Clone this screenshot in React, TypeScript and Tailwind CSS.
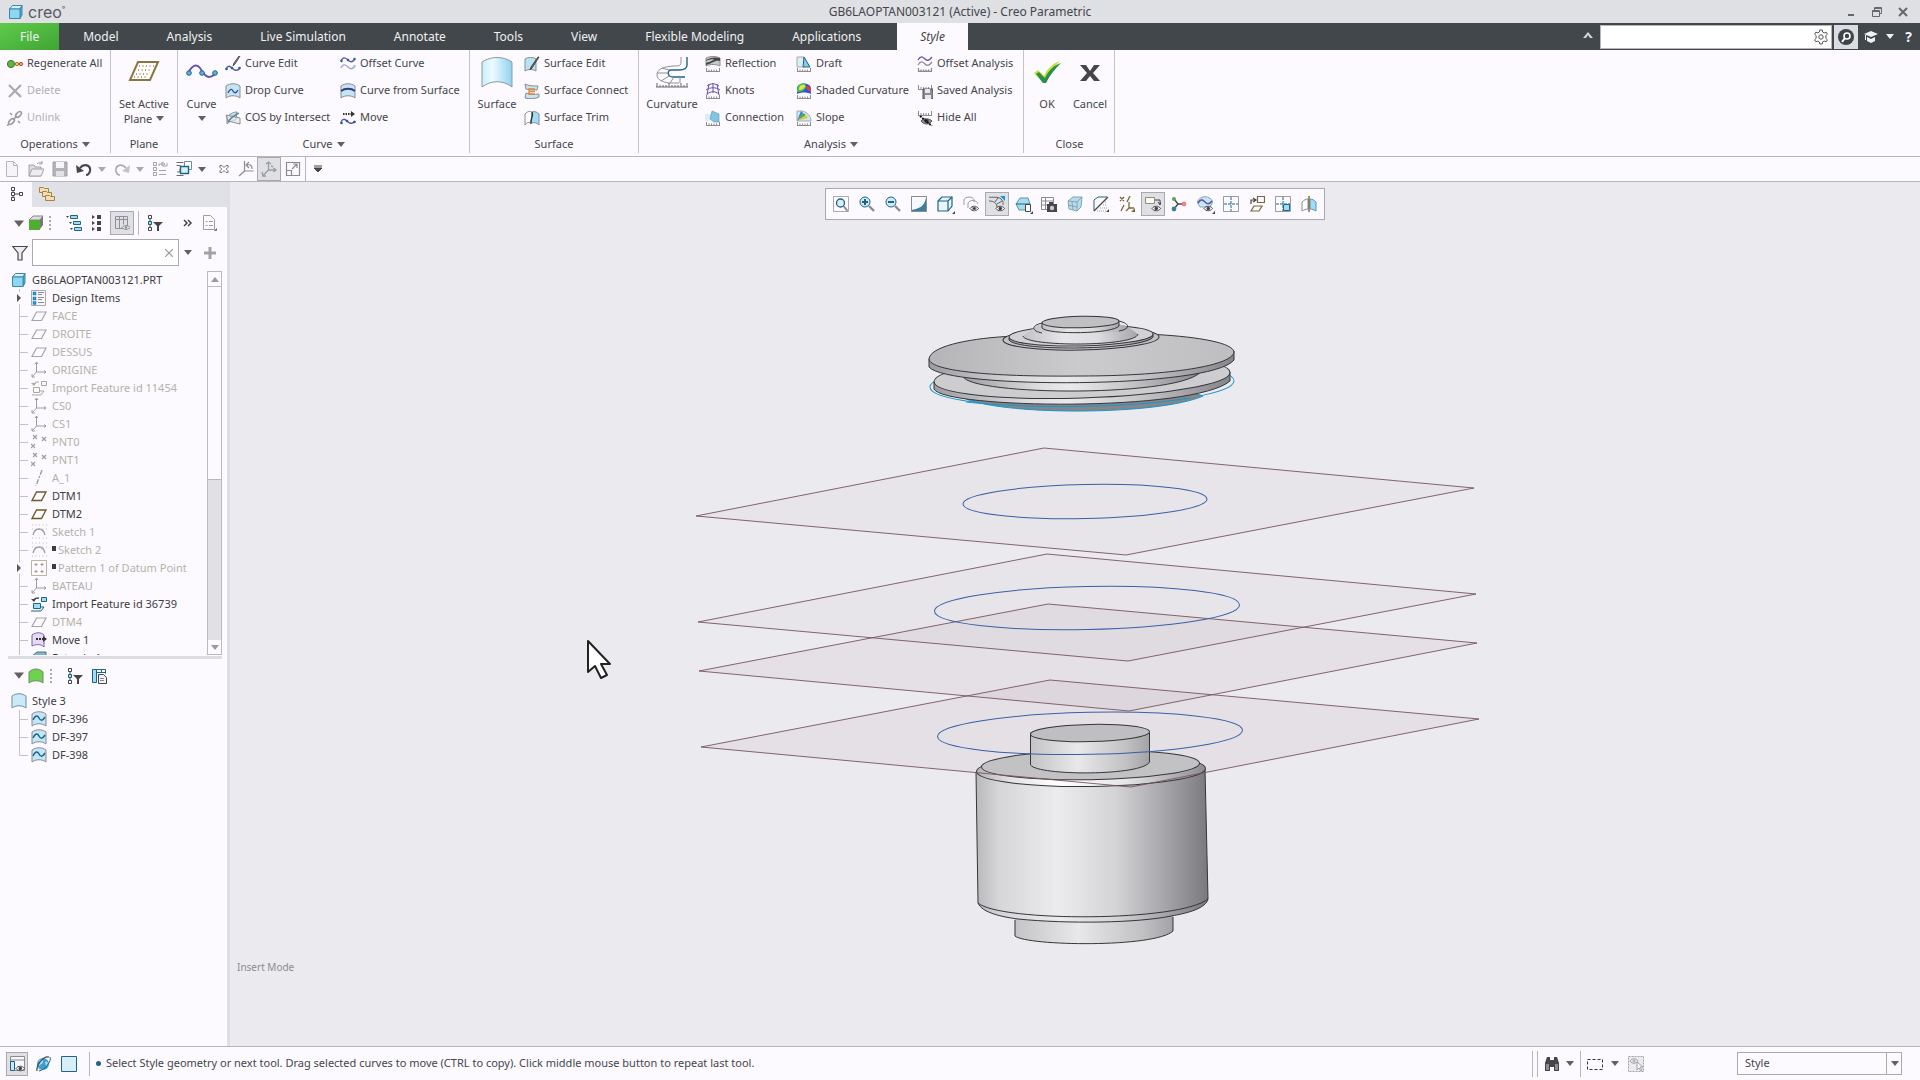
import type { ReactNode } from "react";
import clsx from "clsx";

const blue = "#1d6485";
const sky = "#9fdcf5";
const gray = "#8b8b90";
const dark = "#45454a";
const purple = "#6a4fb0";

const ruler = (
  <path d="M1 15.500h14M1.500 12v3M4 13.500v2M6.500 13.500v2M9 13.500v2M11.500 13.500v2M14.500 12v3" stroke={gray} fill="none" />
);
const eye = (
  <g>
    <path d="M7 12.500c2-3 6.500-3 8.500 0c-2 3-6.500 3-8.500 0z" fill="#fff" stroke={dark} />
    <circle cx="11.300" cy="12.500" r="1.800" fill={dark} />
  </g>
);
const corner = <path d="M16 13v3h-3z" fill={dark} />;
const sheet = (
  <path d="M1 3c4-3 10-3 14 0v12c-4-3-10-3-14 0z" fill="#c3e6f6" stroke={gray} />
);

const icons: Record<string, ReactNode> = {
  regenerate: (
    <g>
      <path d="M8 8h7" stroke="#b04a30" />
      <circle cx="4" cy="8" r="3.600" fill="#5cb548" stroke="#3f7d33" />
      <circle cx="10" cy="8" r="1.700" fill="#f2cf5b" stroke="#a37a1d" />
      <circle cx="14" cy="8" r="1.600" fill="#f6b0a0" stroke="#b23a2a" />
    </g>
  ),
  delete: <path d="M2 2l12 12M14 2L2 14" stroke="#a9a9ae" strokeWidth="2.200" />,
  unlink: (
    <g fill="none" stroke="#9a9a9f" strokeWidth="1.600">
      <ellipse cx="4.500" cy="11.500" rx="3.500" ry="2" transform="rotate(-45 4.500 11.500)" />
      <ellipse cx="11.500" cy="4.500" rx="3.500" ry="2" transform="rotate(-45 11.500 4.500)" />
      <path d="M6 10l4-4M0 16l2-2M5 5L3 3M11 11l2 2" />
    </g>
  ),
  curveEdit: (
    <g fill="none">
      <path d="M15 0l-5 8-2 2 1-3 5-7z" fill="#888" stroke="#555" />
      <path d="M1 13c2-4 4-3 6-1s5 4 8 0" stroke={purple} strokeWidth="1.400" />
      <circle cx="1.500" cy="13" r="1.300" fill={blue} />
      <circle cx="7" cy="12" r="1.300" fill={blue} />
      <circle cx="14.500" cy="12" r="1.300" fill={blue} />
    </g>
  ),
  dropCurve: (
    <g>
      {sheet}
      <path d="M3 10c2-5 4-4 5-2s3 3 5-1" fill="none" stroke="#3a4b93" strokeWidth="1.400" />
    </g>
  ),
  cos: (
    <g fill="none" stroke={gray}>
      <path d="M2 7c4-4 7-5 10-5l-1 8c-3 0-6 1-9 4z" fill="#c5e2ee" />
      <path d="M1 5l14 3v6L3 11z" fill="#e7e7ee" fillOpacity=".7" />
      <path d="M3 12c3-5 6-6 11-9" stroke="#4c8a96" strokeWidth="1.300" />
    </g>
  ),
  offsetCurve: (
    <g fill="none" strokeWidth="1.400">
      <path d="M1 5c2-5 5-3 7-1s4 3 7-1" stroke={purple} />
      <circle cx="1.500" cy="5" r="1.200" fill={blue} />
      <circle cx="8" cy="4" r="1.200" fill={blue} />
      <circle cx="14.500" cy="3" r="1.200" fill={blue} />
      <path d="M1 12c2-5 5-3 7-1s4 3 7-1" stroke="#a9a3cf" />
      <circle cx="14.500" cy="10" r="1.200" fill="#9cc" />
    </g>
  ),
  curveSurface: (
    <g>
      {sheet}
      <path d="M1 8c4-3 10-3 14 0" fill="none" stroke="#35397f" strokeWidth="1.800" />
    </g>
  ),
  move: (
    <g fill="none">
      <path d="M3 4h8" stroke="#333" strokeDasharray="1.500 1" strokeWidth="2" />
      <path d="M11 1l4 3-4 3z" fill="#333" />
      <path d="M1 12c2-4 4-3 6-1s5 4 8 0" stroke={purple} strokeWidth="1.400" />
      <circle cx="1.500" cy="13" r="1.300" fill={blue} />
      <circle cx="7" cy="11" r="1.300" fill={blue} />
      <circle cx="14.500" cy="12" r="1.300" fill={blue} />
    </g>
  ),
  surfaceEdit: (
    <g>
      <path d="M1 3c3-2 8-2 11 0v12c-3-2-8-2-11 0z" fill="#b9e2f2" stroke={gray} />
      <path d="M15 1l-7 11-2 2 1-3 7-10z" fill="#777" stroke="#444" />
    </g>
  ),
  surfaceConnect: (
    <g stroke={gray}>
      <path d="M1 1c4 2 8 2 13 2l-1 4c-4 0-8 0-11-1z" fill="#c3e6f6" />
      <path d="M2 10c4 1 8 2 13 1v3c-4 2-9 2-14 1z" fill="#c3e6f6" />
      <path d="M5 6h6M5 8.500h6M5 11h6M5 5v7" stroke="#e0853b" strokeWidth="1.300" fill="none" />
    </g>
  ),
  surfaceTrim: (
    <g stroke={gray} fill="none">
      <path d="M1 4c3-3 5-3 7-2l-1 11c-2-1-4-1-6 2z" fill="#fff" />
      <path d="M8 2c3-1 5 0 7 2v11c-2-2-4-3-8-2z" fill={sky} />
      <path d="M8 2c2 4-2 7-1 12" stroke="#333" strokeWidth="1.300" />
    </g>
  ),
  reflection: (
    <g>
      <path d="M1 2c4-2 10-2 14 0v8c-4-2-10-2-14 0z" fill="#c8c8cc" stroke={gray} />
      <path d="M1 4c5-3 10-3 14-2v3c-6-1-6 2-14 4V7c5-1 7-3 8-4-4 0-6 1-8 2z" fill="#444" />
      {ruler}
    </g>
  ),
  knots: (
    <g>
      <path d="M2 3c4-3 8-3 12 0M1 7c4-3 10-3 14 0M2 11c4-3 8-3 12 0M4 1L2 12M8 0v10M12 1l2 11" fill="none" stroke={purple} />
      {ruler}
    </g>
  ),
  connection: (
    <g>
      <path d="M0 4h7l-3 7H0z" fill="#d9eef8" />
      <path d="M7 1l7 3v8H9L5 9z" fill="#83c3e2" stroke="#5b94ad" strokeWidth=".6" />
      {ruler}
    </g>
  ),
  draft: (
    <g>
      <path d="M1 1h7v10H1z" fill="#dbeef7" stroke="#a8a8ad" />
      <path d="M8 1l6 10H7z" fill="#8cc7e3" stroke={blue} />
      {ruler}
    </g>
  ),
  shaded: (
    <g>
      <path d="M1 11V5c1-6 13-6 14 0v6c-4-2-10-2-14 0z" fill="#2e52d8" />
      <path d="M1 7c1-8 9-8 9-4s-4 6-9 6z" fill="#3fc45a" />
      <path d="M3 5c1-4 6-4 6-2s-3 4-6 4z" fill="#f3df3a" />
      <path d="M10 3c4 0 5 2 5 6-3-1-5-3-5-6z" fill="#e2403a" />
      {ruler}
    </g>
  ),
  slope: (
    <g>
      <path d="M1 1h5c5 1 9 5 9 10H1z" fill="#cfeaf5" stroke="#9ab" />
      <path d="M1 11L5 1l2 2z" fill="#4277d8" />
      <path d="M1 11L7 3l3 2z" fill="#3fae4f" />
      <path d="M1 11l9-6 2 3z" fill="#e7c33e" />
      {ruler}
    </g>
  ),
  offsetAnalysis: (
    <g fill="none" strokeWidth="1.300">
      <path d="M1 4c3-5 5-3 7-1s4 2 7-2" stroke={purple} />
      <path d="M1 9c3-5 5-3 7-1s4 2 7-2" stroke={gray} />
      {ruler}
    </g>
  ),
  savedAnalysis: (
    <g>
      <path d="M1 6.500h14M1.500 2v4M4 4v2M6.500 4v2M9 4v2M11.500 4v2M14.500 2v4" stroke={gray} />
      <path d="M6 6h10v10H6z" fill="#8a8a90" stroke="#555" />
      <path d="M8 6h5v4H8zM8 12h6v4H8z" fill="#e8e8ec" />
    </g>
  ),
  hideAll: (
    <g>
      <path d="M1 5.500h14M1.500 1v4M4 3v2M6.500 3v2M9 3v2M11.500 3v2M14.500 1v4" stroke={gray} />
      <path d="M4 11c2-3 8-3 11 0-3 4-8 4-11 0z" fill="#8b8b90" stroke="#555" />
      <circle cx="9.500" cy="11" r="2" fill="#333" />
      <path d="M3 6l12 10" stroke="#111" strokeWidth="1.800" strokeDasharray="2 1" />
    </g>
  ),
  file: <path d="M2.500.5h7l4 4v11h-11zM9.500.5v4h4" fill="#f5f5f9" stroke="#b5b5ba" />,
  open: (
    <g stroke="#a2a2a7" fill="#dcdce0">
      <path d="M1 15V4h5l1 2h6v9z" />
      <path d="M1 15l3-7h12l-3 7z" fill="#ededf1" />
      <path d="M9 3c2-2 3-2 5-1M14 0v3h-3" fill="none" />
    </g>
  ),
  save: (
    <g>
      <path d="M1 1h14v14H1z" fill="#b3b3b8" stroke="#a0a0a5" />
      <path d="M4 1h8v6H4z" fill="#f6f6fa" />
      <path d="M4 10h8v5H4z" fill="#e2e2e6" />
    </g>
  ),
  undo: (
    <g>
      <path d="M4 7c4-5 11-3 10 3-.5 2-2 4-4 4" fill="none" stroke={dark} strokeWidth="2.200" />
      <path d="M0 4l1 8 7-2z" fill={dark} />
    </g>
  ),
  redo: (
    <g>
      <path d="M12 7C8 2 1 4 2 10c.5 2 2 4 4 4" fill="none" stroke="#a9a9ae" strokeWidth="1.600" />
      <path d="M16 4l-1 8-7-2z" fill="#c4c4c8" />
    </g>
  ),
  regenModel: (
    <g stroke="#a2a2a7" fill="none">
      <path d="M1.500 1.500h3v3h-3zM1.500 6.500h3v3h-3zM1.500 11.500h3v3h-3zM7 9.500h7M7 13.500h7" />
      <path d="M7 5V3h4M15 2v3h-4M10 1l3 2-3 2z" />
    </g>
  ),
  windows: (
    <g>
      <path d="M.5 1.500h7M.5 4.500h4M.5 14.500h7M4 8v3H1" stroke="#6c6c72" fill="none" />
      <path d="M8.500.5h7v8h-7z" fill="#fff" stroke="#6c8ca0" />
      <path d="M4.500 5.500h8v7h-8z" fill="#d6effa" stroke={blue} strokeWidth="1.400" />
    </g>
  ),
  closeWin: (
    <path d="M2.500 3.500h3L8 6l2.500-2.500h3v2L11 8l2.500 2.500v2h-3L8 10l-2.500 2.500h-3v-2L5 8 2.500 5.500z" fill="#fff" stroke={dark} />
  ),
  axisTurn: (
    <g fill="none" stroke={gray} strokeWidth="1.200">
      <path d="M6.500 0v10h9M6.500 10L1 15" />
      <path d="M9 4c4-1 5 1 5 4M11 1L8 4l3 3" />
    </g>
  ),
  spin: (
    <g fill="none" stroke="#9a9aa0" strokeWidth="1.300">
      <path d="M7.500 1v8h7M7.500 9l-5 5M5 3l2.500-2L10 3M12.500 7L15 9l-2.500 2M1 11l1 4h3M10 5c1 0 2 1 2 1" />
    </g>
  ),
  expand: (
    <g fill="none" stroke={gray}>
      <path d="M1.500 1.500h13v13h-13zM1.500 9.500h5v5M7 8l5-5M8 3h4v4" strokeWidth="1.200" />
    </g>
  ),
  treeTab: (
    <path d="M2.500 1.500h3v3h-3zM2.500 6.500h3v3h-3zM2.500 11.500h3v3h-3zM10.500 6.500h3v3h-3zM6 8h4M4 5v1M4 10v1" fill="none" stroke={dark} />
  ),
  folders: (
    <g fill="#f4deae" stroke="#a3854a">
      <path d="M.5 6.500v-5h4l1 1h4v4z" />
      <path d="M3.500 10.500v-5h4l1 1h4v4z" />
      <path d="M6.500 14.500v-5h4l1 1h4v4z" />
    </g>
  ),
  greenCube: (
    <g>
      <path d="M1 5l4-4h10l-3 4z" fill="#ddd" stroke={gray} />
      <path d="M12 5l3-4v9l-3 4z" fill="#777" />
      <path d="M1 5h11v10H1z" fill="#4fae31" />
    </g>
  ),
  greenSheet: (
    <path d="M1 4c4-4 10-4 14 0v11c-4-3-10-3-14 0z" fill="#6fd24f" stroke="#6b8d62" />
  ),
  outline: (
    <g fill={sky} stroke={blue}>
      <path d="M4.500.5h7v3h-7zM7.500 6.500h7v3h-7zM8.500 12.500h7v3h-7z" />
      <path d="M0 1h3L1.500 3zM3 7h3L4.500 9zM4 13h3l-1.500 2z" fill={dark} stroke="none" />
    </g>
  ),
  nodes: (
    <g fill={dark}>
      <path d="M7 0h4v4H7zM7 6h4v4H7zM7 12h4v4H7z" />
      <path d="M2 0l3 2-3 2zM2 6l3 2-3 2zM2 12l3 2-3 2z" />
    </g>
  ),
  columns: (
    <g>
      <path d="M1.500 1.500h12v12h-12zM1.500 4.500h12M5.500 1.500v12M9.500 1.500v8" fill="none" stroke="#8f8f95" />
      <path d="M8 12.500c2-2.500 6-2.500 8 0-2 2.500-6 2.500-8 0z" fill="#eee" stroke={gray} />
      <circle cx="12" cy="12.500" r="1.200" fill={gray} />
    </g>
  ),
  treeFilter: (
    <g>
      <path d="M1.500.5h3v3h-3zM1.500 12.500h3v3h-3zM3 4v2M3 10v2" fill="none" stroke={dark} />
      <path d="M1.500 6.500h3v3h-3z" fill={sky} stroke={blue} />
      <path d="M6 7h10l-4 4v5h-2v-5z" fill={dark} />
    </g>
  ),
  settingsDoc: (
    <g fill="none" stroke="#9c9ca1">
      <path d="M2.500.5h7l4 4v10h-11zM4.500 6.500h2M4.500 10.500h2M8 6.500h4M8 10.500h4" />
      {corner}
    </g>
  ),
  tableDoc: (
    <g>
      <path d="M1.500 1.500h13v4M1.500 4.500h13M5.500 1.500v13M10.500 1.500v3" fill="none" stroke={blue} />
      <path d="M1.500 1.500h4v13h-4z" fill={sky} stroke={blue} />
      <path d="M7.500 6.500h5l3 3v6h-8z" fill="#f2f2f6" stroke={dark} />
      <path d="M9 10.500h4M9 12.500h4" stroke={gray} />
    </g>
  ),
  funnel: <path d="M.8 1.500h14.400L10 8v7H6V8z" fill="#ededf1" stroke={dark} strokeWidth="1.200" />,
  part: (
    <g stroke="#3d87a6">
      <path d="M1.500 5l3-3.500h9.500l-2 3.500z" fill="#d9f1fb" />
      <path d="M12 5l2-3.500V11l-2 3.500z" fill="#5cb2d6" />
      <path d="M1.500 5H12v9.500H1.500z" fill="#8dd7f5" />
    </g>
  ),
  design: (
    <g fill="none">
      <path d="M.5.5h14v15H.5z" stroke="#a9a9ae" fill="#f7f7fb" />
      <path d="M2.500 2.500h2v2h-2zM2.500 7.500h2v2h-2zM2.500 12h2v2h-2z" stroke="#1f86c4" strokeWidth="1.500" />
      <path d="M7 2.500h6M7 4.500h4M7 7.500h6M7 9.500h4M7 12.500h6" stroke={gray} />
    </g>
  ),
  planeOff: <path d="M5.500 4h9.500l-4.500 8.500H1z" fill="none" stroke="#a5a5aa" strokeWidth="1.200" />,
  planeOn: <path d="M5.500 4h9.500l-4.500 8.500H1z" fill="none" stroke="#6f5a2a" strokeWidth="1.400" />,
  csys: <path d="M5.500 0v10H15M5.500 10L1 15M4 2l1.500-2L7 2M13 8.500l2 1.500-2 1.500M1 12v3h3" fill="none" stroke="#9c9ca1" />,
  importOff: (
    <g fill="none" stroke="#aaa89d">
      <path d="M10.500 1.500h5v4h-5zM2.500 7.500h6v5h-6zM1 15h9l3-4H9" />
      <path d="M3 5c0-3 2-3 5-3" />
      <path d="M0 3h5L3 6z" fill="#aaa89d" stroke="none" />
    </g>
  ),
  importOn: (
    <g fill={sky} stroke={blue}>
      <path d="M10.500 1.500h5v4h-5zM2.500 7.500h7v5h-7z" />
      <path d="M0 15h10l3-4h-3" fill="none" />
      <path d="M3 5c0-3 2-3 5-3" fill="none" stroke={dark} strokeWidth="1.300" />
      <path d="M0 3h5L3 6z" fill={dark} stroke="none" />
    </g>
  ),
  points: <path d="M2 1l4 4M6 1L2 5M11 3l4 4M15 3l-4 4M0 10l4 4M4 10l-4 4" stroke="#9c9ca1" strokeWidth="1.200" />,
  axis: <path d="M11 0L5 16" stroke="#9c9ca1" strokeWidth="1.400" strokeDasharray="5 1.500 2 1.500" />,
  sketch: (
    <g fill="none">
      <path d="M1 1h15M1 5h15M1 14h15" stroke="#bdbdc2" strokeDasharray="1 2.500" />
      <path d="M2 11c2-8 10-8 12 0" stroke="#9c9ca1" strokeWidth="1.300" />
    </g>
  ),
  pattern: (
    <g fill="none">
      <path d="M.5.5h15v15H.5z" stroke="#b9b5a5" />
      <path d="M5 3v3M5 10v3M11 3v3M11 10v3M3.500 4.500h3M3.500 11.500h3M9.500 4.500h3M9.500 11.500h3" stroke="#9d9a8e" />
    </g>
  ),
  moveFeature: (
    <g>
      <path d="M1 3c4-3 9-3 12 0v12c-3-3-8-3-12-1z" fill="#e5daf3" stroke="#7f62ab" />
      <path d="M5 7h7" stroke="#333" strokeWidth="2" strokeDasharray="2 1" />
      <path d="M12 4l4 3-4 3z" fill="#333" />
    </g>
  ),
  extrude: <path d="M1 15V6l5-4h9v9l-4 4z" fill="#7db8cf" stroke="#55707c" />,
  styleSheet: <path d="M1 3c4-3 10-3 14 0v12c-4-3-10-3-14 0z" fill="#cbeaf7" stroke="#6d8fa0" />,
  styleCurve: (
    <g>
      {sheet}
      <path d="M2 9c3-6 5-4 6-2s3 4 6-1" fill="none" stroke={blue} strokeWidth="1.500" />
    </g>
  ),
  refit: (
    <g fill="none">
      <path d="M.5.5h15v15H.5z" stroke="#aaaaaf" />
      <circle cx="7.500" cy="7" r="4" fill="#d8eef8" stroke={blue} strokeWidth="1.300" />
      <path d="M10.500 10l4 5" stroke={gray} strokeWidth="2" />
    </g>
  ),
  zoomIn: (
    <g fill="none">
      <circle cx="6" cy="6" r="5" fill="#cdeaf7" stroke={blue} />
      <path d="M3 6h6M6 3v6" stroke={blue} strokeWidth="2" />
      <path d="M10 10l5 5" stroke={gray} strokeWidth="2.400" />
    </g>
  ),
  zoomOut: (
    <g fill="none">
      <circle cx="6" cy="6" r="5" fill="#cdeaf7" stroke={blue} />
      <path d="M3 6h6" stroke={blue} strokeWidth="2" />
      <path d="M10 10l5 5" stroke={gray} strokeWidth="2.400" />
    </g>
  ),
  repaint: (
    <g>
      <path d="M.5.5h15v15H.5z" fill="#6eb3d0" stroke={gray} />
      <path d="M1 1h14v1C14 10 8 13 1 14z" fill="#f4fafd" />
      <path d="M15 2c-1 8-7 11-14 12v1h14z" fill="#3b7f9e" />
    </g>
  ),
  shading: (
    <g stroke={blue} strokeWidth="1.200" fill="#e9f7fc">
      <path d="M1 5l4-4h10v9l-4 5H1z" />
      <path d="M1 5h10v10M11 5l4-4" fill="none" />
    </g>
  ),
  saved: (
    <g fill="none" stroke="#9a9aa0">
      <path d="M1 9V4c1-4 9-4 10 0v2M5 12V7c2-4 9-3 10 1" />
      {eye}
    </g>
  ),
  style: (
    <g fill="none">
      <path d="M0 1c3 1 9-1 12 2s2 4 2 6M0 5c5 0 8 2 8 7M9 2L6 6M13 5L8 8" stroke="#5c5c62" />
      {eye}
      <path d="M11 0h5v5z" fill="#1a95dc" />
    </g>
  ),
  viewManager: (
    <g>
      <path d="M1 8l4-6h8l2 6-3 6H4z" fill="#a9dcef" stroke="#5b94ad" />
      <path d="M1 8h14" stroke={blue} />
      <path d="M10.500 8.500h5v7h-5z" fill="#fff" stroke={dark} />
    </g>
  ),
  camera: (
    <g>
      <path d="M.5 1.500h12v12H.5zM.5 5h12M.5 9h12M4.500 1.500v12" fill="none" stroke={gray} />
      <path d="M6 8h10v8H6zM8 6h4v2H8z" fill={dark} />
      <circle cx="11" cy="12" r="2.200" fill="#ccc" />
    </g>
  ),
  perspective: (
    <g stroke="#7fa6b8">
      <path d="M1 5l5-4h9l-1 10-4 4-8-2z" fill="#b9dceb" />
      <path d="M1 5l9 1v9M10 6l5-5M5 6l1 8M1 9l9 2" fill="none" />
    </g>
  ),
  section: (
    <g fill="none">
      <path d="M1 15V4l4-3h9" stroke={blue} />
      <path d="M1 15L15 1" stroke={dark} strokeWidth="1.200" />
      <path d="M4 15h9M7 12h7M10 9h4M12 6h2" stroke="#999" strokeDasharray="1 1" />
      {corner}
    </g>
  ),
  datum: (
    <g fill="none" stroke="#7c6537" strokeWidth="1.300">
      <path d="M1 1l4 4M5 1L1 5M11 0l-3 6M5 9l-3 6M10 6v6h5M10 12l-3 3" />
      {corner}
    </g>
  ),
  annotation: (
    <g>
      <path d="M.5 1.500h9v6h-9z" fill="#fffbe6" stroke={gray} />
      <path d="M10 4h5v4M13 6l2 3 1-3" fill="none" stroke={dark} />
      {eye}
    </g>
  ),
  spinCenter: (
    <g>
      <path d="M3 3l4 5h6M7 8l-4 5" stroke={dark} strokeWidth="1.400" fill="none" />
      <circle cx="3" cy="3" r="2" fill="#5aa35a" />
      <circle cx="13" cy="8" r="2.400" fill="#e88484" />
      <circle cx="3" cy="13" r="2.400" fill="#3f7f9c" />
    </g>
  ),
  curveDisplay: (
    <g fill="none">
      <path d="M0 6c3-7 13-7 16 0l-3 5H3z" fill="#c8e8f5" stroke="#7fa6b8" />
      <path d="M1 7c3-5 5-3 7-1s4 3 7-1" stroke={purple} strokeWidth="1.600" />
      {eye}
    </g>
  ),
  grid: (
    <g fill="none">
      <path d="M.5.5h15v15H.5z" stroke="#9a9aa0" />
      <path d="M8 1v14M1 8h14" stroke={blue} strokeDasharray="3 1" />
    </g>
  ),
  planeOrient: (
    <g fill="none" stroke="#7c6537" strokeWidth="1.200">
      <path d="M8.500.5h7v6h-7zM5 10h8l-3 5H2z" />
      <path d="M2 8V4h4M4 2l3 2-3 2" stroke={dark} />
    </g>
  ),
  gridActive: (
    <g fill="none">
      <path d="M.5.5h15v15H.5z" stroke="#9a9aa0" />
      <path d="M8.500 8.500h6v6h-6z" fill={sky} stroke={blue} />
      <path d="M8 1v14M1 8h14" stroke={blue} strokeDasharray="3 1" />
    </g>
  ),
  mirror: (
    <g>
      <path d="M1 6c2-2 4-3 6-3v10c-2 0-4 1-6 2z" fill="#fff" stroke={gray} />
      <path d="M9 3c2 0 4 1 6 3v9c-2-1-4-2-6-2z" fill={sky} stroke="#5b94ad" />
      <path d="M8 0v16" stroke="#6f5a2a" strokeWidth="1.300" />
    </g>
  ),
  navigator: (
    <g>
      <path d="M1.500.5h14v14h-14z" fill="#f7f7fb" stroke={gray} />
      <path d="M1.500 4h14" stroke={gray} />
      <path d="M1.500 5.500h4v9h-4z" fill="#c8e8f5" stroke={blue} />
      {eye}
    </g>
  ),
  browser: (
    <g>
      <circle cx="8" cy="8" r="6" fill="#3c9fd0" />
      <path d="M4 5c2-3 5-2 4 1s-4 2-4 5M10 6c3-1 4 2 1 4" fill="#a8dcf2" />
      <path d="M14 1C8 0 1 9 2 15" fill="none" stroke={dark} strokeWidth="1.200" />
      <path d="M15 1c2 4-5 13-11 14" fill="none" stroke={blue} />
    </g>
  ),
  fullScreen: <path d="M.5.5h15v15H.5z" fill="#d7edf7" stroke={blue} />,
  binoculars: (
    <g fill={dark}>
      <path d="M3 1h3v3h4V1h3l2 6v8h-5v-4H6v4H1V7z" />
      <path d="M2 8h3v6H2zM11 8h3v6h-3z" fill="#8b8b90" />
    </g>
  ),
  marquee: <path d="M.5 3.500h15v10H.5z" fill="none" stroke="#333" strokeDasharray="3 2" />,
  pickEye: (
    <g fill="none" stroke="#a2a2a7">
      <path d="M.5.5h15v15H.5z" fill="#ebebef" strokeDasharray="2 1" />
      <path d="M2 5c2-3 6-3 8 0-2 3-6 3-8 0z" />
      <circle cx="6" cy="5" r="1" />
      <path d="M9 6v8l2-2 2 3 1-1-2-3h3z" fill="#fff" />
    </g>
  ),
};

function Icon({ name, className = "h-4 w-4" }: { name: string; className?: string }) {
  return (
    <svg viewBox="0 0 16 16" className={clsx("shrink-0", className)} aria-hidden="true">
      {icons[name]}
    </svg>
  );
}

function Caret({ className = "text-[#606066]" }: { className?: string }) {
  return (
    <svg viewBox="0 0 8 5" className={clsx("h-[5px] w-2 shrink-0", className)} aria-hidden="true">
      <path d="M0 0h8L4 5z" fill="currentColor" />
    </svg>
  );
}

const tabs = [
  "Model",
  "Analysis",
  "Live Simulation",
  "Annotate",
  "Tools",
  "View",
  "Flexible Modeling",
  "Applications",
];

function TitleBar() {
  return (
    <header className="relative flex h-[23px] shrink-0 items-center bg-[#dee0e4] px-2 text-xs text-[#45454a]">
      <Icon name="part" className="h-4 w-4" />
      <span className="ml-1 font-[Inter,sans-serif] text-base leading-4 text-[#54585c]">
        creo<span className="align-super text-[8px] leading-none">°</span>
      </span>
      <h1 className="absolute inset-x-0 top-1 text-center leading-4">
        GB6LAOPTAN003121 (Active) - Creo Parametric
      </h1>
      <div className="relative ml-auto flex items-center gap-[14px] pr-[3px] text-[#66666c]">
        <button aria-label="Minimize">
          <svg viewBox="0 0 12 12" className="h-3 w-3">
            <path d="M3 9h6" stroke="currentColor" strokeWidth="2" />
          </svg>
        </button>
        <button aria-label="Restore">
          <svg viewBox="0 0 12 12" className="h-3 w-3" fill="none" stroke="currentColor">
            <path d="M3.500 4V1.500h7v6H8M3.500 2.500h7M1.500 4.500h7v6h-7zM1.500 5.500h7" />
          </svg>
        </button>
        <button aria-label="Close window">
          <svg viewBox="0 0 12 12" className="h-3 w-3">
            <path d="M2 2l8 8M10 2l-8 8" stroke="currentColor" strokeWidth="2" />
          </svg>
        </button>
      </div>
    </header>
  );
}

function MenuBar() {
  return (
    <nav className="flex h-[27px] shrink-0 bg-[#41474a] text-xs text-[#f1f1f4]">
      <button className="bg-linear-to-br from-[#5ecb4a] to-[#3fa535] px-5">File</button>
      <div className="flex">
        {tabs.map((tab) => (
          <button key={tab} className="px-6">
            {tab}
          </button>
        ))}
      </div>
      <button className="ml-3 bg-[#fcfaff] px-[23px] text-[#45454a] italic">Style</button>
      <div className="ml-auto flex items-center">
        <button aria-label="Minimize the ribbon" className="mr-[6px] mb-1">
          <svg viewBox="0 0 12 8" className="h-2 w-3">
            <path d="M1 7l5-6 5 6H8L6 4 4 7z" fill="#d5d5da" />
          </svg>
        </button>
        <div className="flex h-6 w-[232px] items-center border border-[#b5b5ba] bg-white pr-[2px]">
          <input aria-label="Search commands" className="h-full min-w-0 flex-1 px-1 text-[#45454a] outline-none" />
          <button aria-label="Search options">
            <svg viewBox="0 0 16 16" className="h-4 w-4" fill="none" stroke="#55555a">
              <path d="M6.800 1h2.400l.4 2 1.600.9 2-.7 1.200 2L12.900 6.600v2.800l1.500 1.400-1.200 2-2-.7-1.600.9-.4 2H6.800l-.4-2-1.600-.9-2 .7-1.200-2 1.500-1.400V6.600L1.600 5.200l1.200-2 2 .7L6.400 3z" />
              <circle cx="8" cy="8" r="2.200" />
            </svg>
          </button>
        </div>
        <button aria-label="Search" className="ml-[2px] flex h-6 w-6 items-center justify-center bg-[#dcdde2]">
          <svg viewBox="0 0 16 16" className="h-4 w-4">
            <circle cx="8" cy="8" r="8" fill="#3f4447" />
            <circle cx="9" cy="7" r="3" fill="none" stroke="#fff" strokeWidth="1.600" />
            <path d="M7 9l-3 4" stroke="#fff" strokeWidth="2" />
          </svg>
        </button>
        <button aria-label="Learning" className="ml-[6px] flex items-center gap-2">
          <svg viewBox="0 0 14 14" className="h-[14px] w-[14px]" fill="#f1f1f4">
            <path d="M0 4l7-3 7 3-7 3zM3 7l4 2 4-2v4l-4 2-4-2zM1 5h1v5H1z" />
          </svg>
          <Caret className="text-[#f1f1f4]" />
        </button>
        <button aria-label="Help" className="mr-2 ml-[11px] text-sm leading-4 font-bold">
          ?
        </button>
      </div>
    </nav>
  );
}

type Command = { label: string; icon: string; off?: boolean };

function Column({ items, className }: { items: Command[]; className?: string }) {
  return (
    <div className={clsx("flex flex-col", className)}>
      {items.map((item) => (
        <button
          key={item.label}
          disabled={item.off}
          className={clsx("flex h-[27px] items-center gap-1 whitespace-nowrap", item.off && "text-[#b0b0b5]")}
        >
          <Icon name={item.icon} />
          {item.label}
        </button>
      ))}
    </div>
  );
}

function BigButton({ label, className, children }: { label: ReactNode; className?: string; children: ReactNode }) {
  return (
    <button className={clsx("flex h-[81px] flex-col items-center pt-[6px]", className)}>
      <svg viewBox="0 0 32 32" className="h-8 w-8" fill="none">
        {children}
      </svg>
      <span className="flex flex-col items-center pt-2 leading-[15px]">{label}</span>
    </button>
  );
}

function Group({ title, menu, className, children }: { title: string; menu?: boolean; className?: string; children: ReactNode }) {
  return (
    <section className={clsx("flex flex-col border-r border-[#c3c3c8]", className)}>
      <div className="flex">{children}</div>
      <div className="flex h-[21px] items-center justify-center pt-[6px]">
        {menu ? (
          <button className="flex items-center gap-1">
            {title}
            <Caret />
          </button>
        ) : (
          title
        )}
      </div>
    </section>
  );
}

function Ribbon() {
  return (
    <div className="flex h-[107px] shrink-0 border-b border-[#b6b6bb] bg-[#fcfaff] pb-[3px] text-[11px] text-[#45454a]">
      <Group title="Operations" menu className="w-[111px]">
        <Column
          className="pl-[7px]"
          items={[
            { label: "Regenerate All", icon: "regenerate" },
            { label: "Delete", icon: "delete", off: true },
            { label: "Unlink", icon: "unlink", off: true },
          ]}
        />
      </Group>
      <Group title="Plane" className="w-[67px]">
        <BigButton
          className="w-full"
          label={
            <>
              <span>Set Active</span>
              <span className="flex items-center gap-1">
                Plane <Caret />
              </span>
            </>
          }
        >
          <path d="M10 6h20l-8 18H2z" stroke="#8a7443" strokeWidth="2" fill="#fffdf5" />
          <path d="M11 10h15M10 14h14M8 18h14M6 21h14" stroke="#444" strokeDasharray="1 2.500" />
        </BigButton>
      </Group>
      <Group title="Curve" menu className="w-[292px]">
        <BigButton
          className="w-[47px]"
          label={
            <>
              Curve
              <span className="flex h-[15px] items-center">
                <Caret />
              </span>
            </>
          }
        >
          <path d="M2 17C7 8 11 8 14 12c3 4 4 9 9 9 4 0 5-3 8-5" stroke={purple} strokeWidth="2" />
          <circle cx="3" cy="17" r="2.300" fill="#5cb6d9" stroke={blue} />
          <circle cx="16" cy="17" r="2.300" fill="#5cb6d9" stroke={blue} />
          <circle cx="29" cy="17" r="2.300" fill="#5cb6d9" stroke={blue} />
        </BigButton>
        <Column
          className="w-[115px]"
          items={[
            { label: "Curve Edit", icon: "curveEdit" },
            { label: "Drop Curve", icon: "dropCurve" },
            { label: "COS by Intersect", icon: "cos" },
          ]}
        />
        <Column
          items={[
            { label: "Offset Curve", icon: "offsetCurve" },
            { label: "Curve from Surface", icon: "curveSurface" },
            { label: "Move", icon: "move" },
          ]}
        />
      </Group>
      <Group title="Surface" className="w-[169px]">
        <BigButton className="w-[54px]" label="Surface">
          <defs>
            <linearGradient id="sheetFill">
              <stop offset="0" stopColor="#c8edfb" />
              <stop offset=".35" stopColor="#eefaff" />
              <stop offset="1" stopColor="#8fd3f0" />
            </linearGradient>
          </defs>
          <path d="M1 6c9-6 21-6 30 0v25c-9-7-21-7-30 0z" fill="url(#sheetFill)" stroke="#8b9aa3" />
        </BigButton>
        <Column
          items={[
            { label: "Surface Edit", icon: "surfaceEdit" },
            { label: "Surface Connect", icon: "surfaceConnect" },
            { label: "Surface Trim", icon: "surfaceTrim" },
          ]}
        />
      </Group>
      <Group title="Analysis" menu className="w-[385px]">
        <BigButton className="w-[66px]" label="Curvature">
          <path d="M31 1v8c0 4-3 5-8 5h-8c-4 0-4 7 2 7h12" stroke={blue} strokeWidth="1.400" />
          <path d="M25 1v5c0 4-2 4-8 4C5 11 1 14 1 19c0 5 6 7 12 8h10M13 14L6 12M12 17H1M13 20l-8 5M18 21l-4 6M24 21v6" stroke="#909095" />
          <path d="M0 31h32M1 27v4M4 29v2M7 29v2M10 29v2M13 27v4M16 29v2M19 29v2M22 29v2M25 27v4M28 29v2M31 27v4" stroke="#66666b" />
        </BigButton>
        <Column
          className="w-[91px]"
          items={[
            { label: "Reflection", icon: "reflection" },
            { label: "Knots", icon: "knots" },
            { label: "Connection", icon: "connection" },
          ]}
        />
        <Column
          className="w-[121px]"
          items={[
            { label: "Draft", icon: "draft" },
            { label: "Shaded Curvature", icon: "shaded" },
            { label: "Slope", icon: "slope" },
          ]}
        />
        <Column
          items={[
            { label: "Offset Analysis", icon: "offsetAnalysis" },
            { label: "Saved Analysis", icon: "savedAnalysis" },
            { label: "Hide All", icon: "hideAll" },
          ]}
        />
      </Group>
      <Group title="Close" className="w-[91px] pl-px">
        <BigButton className="w-[44px]" label="OK">
          <path d="M3 17l4-3 6 6C16 13 22 7 29 5c-6 6-11 13-14 22h-3z" fill="#c4e23a" />
          <path d="M5 18l3-2 6 6C17 15 23 9 30 7c-6 6-11 12-15 20h-3z" fill="#2f8f4a" />
        </BigButton>
        <BigButton className="w-[42px]" label="Cancel">
          <path d="M6 9h6l4 6 4-6h6l-7 8 7 8h-6l-4-5-4 5H6l7-8z" fill={dark} />
        </BigButton>
      </Group>
    </div>
  );
}

function QuickBar() {
  return (
    <div className="flex h-[25px] shrink-0 items-center border-b border-[#b6b6bb] bg-[#fcfaff] pl-1 text-[#b0b0b5]">
      <button aria-label="New" className="mr-2">
        <Icon name="file" />
      </button>
      <button aria-label="Open" className="mr-2">
        <Icon name="open" />
      </button>
      <button aria-label="Save" className="mr-2">
        <Icon name="save" />
      </button>
      <button aria-label="Undo" className="mr-[6px]">
        <Icon name="undo" />
      </button>
      <button aria-label="Undo list" className="mr-2">
        <Caret className="text-[#a9a9ae]" />
      </button>
      <button aria-label="Redo" className="mr-[6px]">
        <Icon name="redo" />
      </button>
      <button aria-label="Redo list" className="mr-2">
        <Caret className="text-[#a9a9ae]" />
      </button>
      <button aria-label="Regenerate" className="mr-2">
        <Icon name="regenModel" />
      </button>
      <button aria-label="Windows" className="mr-[6px]">
        <Icon name="windows" />
      </button>
      <button aria-label="Window list" className="mr-3">
        <Caret />
      </button>
      <button aria-label="Close" className="mr-2">
        <Icon name="closeWin" className="h-3 w-3" />
      </button>
      <button aria-label="Reorient" className="mr-[3px]">
        <Icon name="axisTurn" />
      </button>
      <button
        aria-label="Spin"
        aria-pressed="true"
        className="mr-1 flex h-6 w-6 items-center justify-center border border-[#a9a9ae] bg-[#dfe0e4]"
      >
        <Icon name="spin" />
      </button>
      <button aria-label="Maximize view" className="mr-1">
        <Icon name="expand" />
      </button>
      <button aria-label="Customize toolbar" className="flex h-6 items-center border-l border-[#b6b6bb] pl-2">
        <svg viewBox="0 0 8 8" className="h-2 w-2">
          <path d="M0 1h8M0 3h8L4 7z" stroke={dark} fill={dark} />
        </svg>
      </button>
    </div>
  );
}

type Node = { label: string; icon: string; on?: boolean; mark?: boolean; open?: boolean };

const features: Node[] = [
  { label: "Design Items", icon: "design", on: true, open: true },
  { label: "FACE", icon: "planeOff" },
  { label: "DROITE", icon: "planeOff" },
  { label: "DESSUS", icon: "planeOff" },
  { label: "ORIGINE", icon: "csys" },
  { label: "Import Feature id 11454", icon: "importOff" },
  { label: "CS0", icon: "csys" },
  { label: "CS1", icon: "csys" },
  { label: "PNT0", icon: "points" },
  { label: "PNT1", icon: "points" },
  { label: "A_1", icon: "axis" },
  { label: "DTM1", icon: "planeOn", on: true },
  { label: "DTM2", icon: "planeOn", on: true },
  { label: "Sketch 1", icon: "sketch" },
  { label: "Sketch 2", icon: "sketch", mark: true },
  { label: "Pattern 1 of Datum Point", icon: "pattern", mark: true, open: true },
  { label: "BATEAU", icon: "csys" },
  { label: "Import Feature id 36739", icon: "importOn", on: true },
  { label: "DTM4", icon: "planeOff" },
  { label: "Move 1", icon: "moveFeature", on: true },
  { label: "Extrude 1", icon: "extrude", on: true },
];

const styleCurves = ["DF-396", "DF-397", "DF-398"];

function TreeRow({ node, last }: { node: Node; last?: boolean }) {
  return (
    <li
      className={clsx(
        "flex h-[18px] items-center pl-3 whitespace-nowrap",
        node.on ? "text-[#3c3c41]" : "text-[#b4b2a9]",
      )}
    >
      <svg viewBox="0 0 16 18" className="mr-[3px] h-[18px] w-4 shrink-0" aria-hidden="true">
        {node.open ? (
          <>
            <path d="M7.500 0v3M7.500 15v3" stroke="#c3c3c7" />
            <path d="M5 5v8l4-4z" fill="#55555a" />
          </>
        ) : (
          <path d={last ? "M7.500 0v9.500H16" : "M7.500 0v18M7.500 9.500H16"} stroke="#c3c3c7" fill="none" />
        )}
      </svg>
      <Icon name={node.icon} className="mr-[5px] h-4 w-4" />
      {node.mark && <span className="mr-[2px] mb-1 h-[5px] w-1 bg-[#3c3c41]" />}
      {node.label}
    </li>
  );
}

function Grip() {
  return (
    <svg viewBox="0 0 4 16" className="h-4 w-1 shrink-0" aria-hidden="true">
      <path d="M2 1v14" stroke="#aaaaaf" strokeWidth="2" strokeDasharray="2 2" />
    </svg>
  );
}

function ModelTree() {
  return (
    <aside className="flex w-[230px] shrink-0 flex-col border-r-[3px] border-[#dedee4] bg-[#fcfaff] text-[11px]">
      <div className="flex h-[25px] shrink-0 bg-[#e0e1e6]">
        <button aria-label="Model Tree" className="flex w-8 justify-center bg-[#fcfaff] pt-1 pl-[2px]">
          <Icon name="treeTab" />
        </button>
        <button aria-label="Folder Browser" className="flex w-[30px] justify-center pt-1">
          <Icon name="folders" />
        </button>
      </div>

      <div className="flex h-8 shrink-0 items-center pl-[14px]">
        <button aria-label="Collapse tree">
          <Caret className="h-[7px] w-[10px] text-[#606066]" />
        </button>
        <Icon name="greenCube" className="ml-1 h-4 w-4" />
        <span className="ml-1">
          <Grip />
        </span>
        <button aria-label="Expand" className="ml-[14px]">
          <Icon name="outline" />
        </button>
        <button aria-label="Nodes" className="ml-2">
          <Icon name="nodes" />
        </button>
        <button
          aria-label="Tree columns"
          className="ml-1 flex h-6 w-6 items-center justify-center border border-[#a9a9ae] bg-[#dfe0e4]"
        >
          <Icon name="columns" />
        </button>
        <span className="ml-1 h-6 w-px bg-[#b6b6bb]" />
        <button aria-label="Tree filters" className="ml-2">
          <Icon name="treeFilter" />
        </button>
        <button aria-label="More" className="ml-5">
          <svg viewBox="0 0 10 8" className="h-2 w-[10px]" fill="none" stroke={dark} strokeWidth="1.500">
            <path d="M1 1l3 3-3 3M5 1l3 3-3 3" />
          </svg>
        </button>
        <button aria-label="Tree settings" className="ml-2">
          <Icon name="settingsDoc" />
        </button>
      </div>

      <div className="flex h-[27px] shrink-0 items-center pl-3">
        <Icon name="funnel" />
        <div className="ml-1 flex h-[27px] w-[147px] items-center border border-[#aaaaaf] bg-white pr-[5px]">
          <input aria-label="Filter tree" className="min-w-0 flex-1 px-1 outline-none" />
          <button aria-label="Clear">
            <svg viewBox="0 0 8 8" className="h-2 w-2">
              <path d="M0 0l8 8M8 0L0 8" stroke="#99999e" strokeWidth="1.200" />
            </svg>
          </button>
        </div>
        <button aria-label="Filter history" className="ml-[5px]">
          <Caret />
        </button>
        <button aria-label="Add filter" className="ml-3">
          <svg viewBox="0 0 12 12" className="h-3 w-3">
            <path d="M6 0v12M0 6h12" stroke="#a2a2a7" strokeWidth="3" />
          </svg>
        </button>
      </div>

      <div className="mt-[5px] mr-[5px] flex h-96 shrink-0 overflow-hidden">
        <ul className="min-w-0 flex-1">
          <li className="flex h-[18px] items-center gap-[5px] pl-[11px] text-[#3c3c41]">
            <Icon name="part" />
            GB6LAOPTAN003121.PRT
          </li>
          {features.map((node) => (
            <TreeRow key={node.label} node={node} />
          ))}
        </ul>
        <div className="flex w-[15px] flex-col border border-[#b9b9be] bg-[#e0e0e5]">
          <button aria-label="Scroll up" className="flex h-[14px] items-center justify-center bg-[#fcfaff]">
            <Caret className="rotate-180 text-[#99999e]" />
          </button>
          <div className="h-[194px] border-y border-[#b9b9be] bg-[#fcfaff]" />
          <button aria-label="Scroll down" className="mt-auto flex h-[14px] items-center justify-center bg-[#fcfaff]">
            <Caret className="text-[#99999e]" />
          </button>
        </div>
      </div>
      <div className="mt-px mr-[5px] ml-2 h-[3px] shrink-0 bg-[#dcdce1]" />

      <div className="flex h-[33px] shrink-0 items-center pl-[14px]">
        <button aria-label="Collapse style tree">
          <Caret className="h-[7px] w-[10px] text-[#606066]" />
        </button>
        <Icon name="greenSheet" className="ml-1 h-4 w-4" />
        <span className="ml-[5px]">
          <Grip />
        </span>
        <button aria-label="Style tree filters" className="ml-[14px]">
          <Icon name="treeFilter" />
        </button>
        <button aria-label="Style tree columns" className="ml-2">
          <Icon name="tableDoc" />
        </button>
      </div>
      <ul className="text-[#3c3c41]">
        <li className="flex h-[18px] items-center gap-[5px] pl-[11px]">
          <Icon name="styleSheet" />
          Style 3
        </li>
        {styleCurves.map((label, i) => (
          <TreeRow key={label} node={{ label, icon: "styleCurve", on: true }} last={i === styleCurves.length - 1} />
        ))}
      </ul>
    </aside>
  );
}

const viewTools = [
  { icon: "refit", label: "Refit" },
  { icon: "zoomIn", label: "Zoom In" },
  { icon: "zoomOut", label: "Zoom Out" },
  { icon: "repaint", label: "Repaint" },
  { icon: "shading", label: "Display Style", menu: true },
  { icon: "saved", label: "Hidden Line" },
  { icon: "style", label: "Edge Display", on: true },
  { icon: "viewManager", label: "Saved Orientations", menu: true },
  { icon: "camera", label: "View Manager" },
  { icon: "perspective", label: "Perspective View" },
  { icon: "section", label: "Section" },
  { icon: "datum", label: "Datum Display Filters" },
  { icon: "annotation", label: "Annotation Display", on: true },
  { icon: "spinCenter", label: "Spin Center" },
  { icon: "curveDisplay", label: "Curve Display", menu: true },
  { icon: "grid", label: "Show Grid" },
  { icon: "planeOrient", label: "Active Plane Orientation" },
  { icon: "gridActive", label: "Four Views" },
  { icon: "mirror", label: "Mirror" },
];

const planes = [
  "696,516 1044,448 1474,488 1126,555",
  "698,622 1047,554 1476,594 1128,661",
  "699,671 1048,604 1477,643 1129,711",
  "701,747 1050,680 1479,719 1131,787",
];

function Scene() {
  return (
    <svg
      viewBox="230 182 1690 864"
      className="h-full w-full"
      fill="none"
      stroke="#35353a"
      strokeWidth="1"
      role="img"
      aria-label="3D model"
    >
      <defs>
        <linearGradient id="body">
          <stop offset="0" stopColor="#b9b8bb" />
          <stop offset=".1" stopColor="#d6d5d8" />
          <stop offset=".35" stopColor="#ececee" />
          <stop offset=".6" stopColor="#d4d3d6" />
          <stop offset=".8" stopColor="#a9a8ac" />
          <stop offset="1" stopColor="#7a797e" />
        </linearGradient>
        <linearGradient id="shaft">
          <stop offset="0" stopColor="#c4c3c5" />
          <stop offset=".4" stopColor="#e8e7ea" />
          <stop offset=".8" stopColor="#c2c1c3" />
          <stop offset="1" stopColor="#a3a2a5" />
        </linearGradient>
        <linearGradient id="rim">
          <stop offset="0" stopColor="#9d9ca0" />
          <stop offset=".3" stopColor="#dad9dc" />
          <stop offset=".45" stopColor="#eae9ec" />
          <stop offset=".7" stopColor="#c5c4c7" />
          <stop offset="1" stopColor="#85848a" />
        </linearGradient>
        <linearGradient id="fillet">
          <stop offset="0" stopColor="#b4b3b6" />
          <stop offset=".15" stopColor="#e2e1e4" />
          <stop offset=".35" stopColor="#ffffff" />
          <stop offset=".65" stopColor="#e6e5e8" />
          <stop offset=".85" stopColor="#b3b2b5" />
          <stop offset="1" stopColor="#8d8c90" />
        </linearGradient>
        <linearGradient id="cone">
          <stop offset="0" stopColor="#c2c1c4" />
          <stop offset=".35" stopColor="#e6e5e8" />
          <stop offset=".65" stopColor="#dddcdf" />
          <stop offset="1" stopColor="#a6a5a9" />
        </linearGradient>
        <linearGradient id="saucer">
          <stop offset="0" stopColor="#b5b4b7" />
          <stop offset=".5" stopColor="#cbcacd" />
          <stop offset="1" stopColor="#bebdc0" />
        </linearGradient>
      </defs>

      <g fill="#7a4a5a" stroke="none">
        {planes.map((points, i) => (
          <polygon key={points} points={points} fillOpacity={i < 2 ? 0.03 : 0.06} />
        ))}
      </g>

      <g>
        <ellipse cx="1082" cy="384" rx="152" ry="22.500" stroke="#1797c9" transform="rotate(-1.200 1082 384)" />
        <path d="M966 399C1010 416 1160 415 1203 396L1180 388H980z" fill="#85868b" stroke="#1797c9" />
        <path d="M934 382v7c10 20 260 23 296-8v-9z" fill="url(#rim)" />
        <ellipse cx="1082" cy="377" rx="148" ry="21" fill="#cdccce" transform="rotate(-1.800 1082 377)" />
        <path d="M963 376c4 20 225 22 239-6z" fill="url(#rim)" />
        <path d="M929 359v8c18 22 282 22 305-7v-9z" fill="url(#rim)" />
        <path
          d="M929 359C930 347 965 339 1006 336.500L1156 334.500C1200 337 1233 343 1234 352C1232 367 1160 376 1081 376C1000 377 930 372 929 359z"
          fill="url(#saucer)"
        />
        <path d="M966 402C1030 409 1130 408 1190 398" stroke="#1797c9" />
        <ellipse cx="1081" cy="338.500" rx="78" ry="11.500" fill="#c2c1c4" transform="rotate(-1.200 1081 338.500)" />
        <path d="M1009 338v2c8 12 136 10 144-3v-3z" fill="url(#rim)" />
        <ellipse cx="1081" cy="335.500" rx="72" ry="10.500" fill="#d2d1d4" transform="rotate(-1.200 1081 335.500)" />
        <path d="M1034 328L1023 336C1025 347 1136 347 1138 334L1128 327z" fill="url(#cone)" stroke="none" />
        <path d="M1023 336C1025 347 1136 347 1138 334" />
        <ellipse cx="1081" cy="328" rx="47" ry="6.500" fill="url(#cone)" stroke="none" />
        <path d="M1042 323C1030 326 1032 331 1042 333M1119 321C1131 324 1130 329 1119 331" />
        <path d="M1042 323v5c6 7 71 6 77-2v-5z" fill="url(#cone)" />
        <ellipse cx="1080.500" cy="322" rx="38.500" ry="5.800" fill="#c0bfc2" transform="rotate(-1.200 1080 322)" />
      </g>

      <g>
        <path d="M1015 915v21c12 10 140 12 158-5v-18z" fill="url(#shaft)" stroke="none" />
        <path d="M1015 920v16c12 10 140 12 158-5v-14" />
        <path d="M978 903c4 10 25 14 40 16 50 5 120 4 153-3 18-3 35-8 37-17z" fill="url(#body)" />
        <path d="M976 772L978 903C1000 922 1180 922 1208 899L1205 769z" fill="url(#body)" stroke="none" />
        <path d="M976 772L978 903C1000 922 1180 922 1208 899L1205 769" />
        <ellipse cx="1091" cy="770" rx="114.500" ry="16.500" fill="url(#fillet)" transform="rotate(-.8 1091 770)" />
        <ellipse cx="1090.500" cy="765" rx="109" ry="14.700" fill="#c2c1c4" transform="rotate(-1 1090 765)" />
        <path d="M1030.500 733v32c8 11 112 11 119-3v-29z" fill="url(#shaft)" />
        <ellipse cx="1090" cy="733" rx="59.500" ry="8.600" fill="#bfbec1" transform="rotate(-1.200 1090 733)" />
      </g>

      <g stroke="#76555e" strokeWidth=".9">
        {planes.map((points) => (
          <polygon key={points} points={points} />
        ))}
      </g>
      <g stroke="#3a5fa8">
        <ellipse cx="1085" cy="501.500" rx="122" ry="17" transform="rotate(-1.200 1085 501.500)" />
        <ellipse cx="1087" cy="608" rx="152.500" ry="21.500" transform="rotate(-1.200 1087 608)" />
        <ellipse cx="1090" cy="733.300" rx="152.500" ry="21" transform="rotate(-1.200 1090 733.300)" />
      </g>

      <path
        d="M588 641v31l7-6 6 12 6-3-6-11h9z"
        fill="#fff"
        stroke="#222"
        strokeWidth="2"
        strokeLinejoin="round"
      />
    </svg>
  );
}

function Viewport() {
  return (
    <main className="relative min-w-0 flex-1 overflow-hidden bg-[#ebeaef]">
      <Scene />
      <div
        role="toolbar"
        aria-label="Graphics toolbar"
        className="absolute top-[6px] left-1/2 flex h-8 -translate-x-1/2 items-center gap-[2px] border border-[#a9a9ae] bg-[#fcfaff] px-[3px]"
      >
        {viewTools.map((tool) => (
          <button
            key={tool.label}
            aria-label={tool.label}
            className={clsx(
              "relative flex h-6 w-6 items-center justify-center border",
              tool.on ? "border-[#a9a9ae] bg-[#dfe0e4]" : "border-transparent",
            )}
          >
            <Icon name={tool.icon} />
            {tool.menu && (
              <svg viewBox="0 0 3 3" className="absolute right-px bottom-px h-[3px] w-[3px]">
                <path d="M3 0v3H0z" fill={dark} />
              </svg>
            )}
          </button>
        ))}
      </div>
      <p className="absolute bottom-[71px] left-[7px] text-[10px] leading-4 text-[#8b8b90]">Insert Mode</p>
    </main>
  );
}

function StatusBar() {
  return (
    <footer className="flex h-[34px] shrink-0 items-center border-t border-[#b6b6bb] bg-[#fcfaff] pr-[18px] pl-[6px] text-[11px] text-[#45454a]">
      <button
        aria-label="Navigator"
        aria-pressed="true"
        className="flex h-6 w-[22px] items-center justify-center border border-[#a9a9ae] bg-[#dfe0e4]"
      >
        <Icon name="navigator" />
      </button>
      <button aria-label="Web browser" className="ml-[7px]">
        <Icon name="browser" />
      </button>
      <button aria-label="Full screen" className="ml-[10px]">
        <Icon name="fullScreen" />
      </button>
      <span className="ml-3 h-6 w-px bg-[#b6b6bb]" />
      <span className="mr-[5px] ml-[6px] h-[5px] w-[5px] rounded-full bg-[#1d6485]" />
      <p className="min-w-0 truncate">
        Select Style geometry or next tool. Drag selected curves to move (CTRL to copy). Click middle mouse button to
        repeat last tool.
      </p>
      <div className="ml-auto flex shrink-0 items-center">
        <span className="h-[26px] w-[6px] border-x border-[#b6b6bb]" />
        <button aria-label="Find" className="ml-[6px] flex items-center gap-[6px]">
          <Icon name="binoculars" />
          <Caret />
        </button>
        <span className="ml-[6px] h-[26px] w-px bg-[#b6b6bb]" />
        <button aria-label="Selection box" className="ml-[6px] flex items-center gap-2">
          <Icon name="marquee" />
          <Caret />
        </button>
        <button aria-label="Pick visible" className="ml-[9px]">
          <Icon name="pickEye" />
        </button>
        <div className="relative ml-[93px] flex">
          <select
            aria-label="Selection filter"
            className="h-[23px] w-[165px] appearance-none border border-[#a9a9ae] bg-[#fcfaff] pl-[7px] outline-none"
          >
            <option>Style</option>
          </select>
          <span className="pointer-events-none absolute inset-y-0 right-0 flex w-4 items-center justify-center border-l border-[#a9a9ae]">
            <Caret />
          </span>
        </div>
      </div>
    </footer>
  );
}

export default function App() {
  return (
    <div className="flex h-screen flex-col overflow-hidden font-['Noto_Sans',sans-serif]">
      <TitleBar />
      <MenuBar />
      <Ribbon />
      <QuickBar />
      <div className="flex min-h-0 flex-1">
        <ModelTree />
        <Viewport />
      </div>
      <StatusBar />
    </div>
  );
}
